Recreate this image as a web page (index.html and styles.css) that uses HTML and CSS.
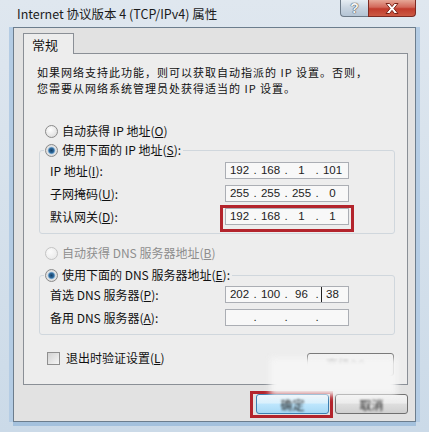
FILE: index.html
```html
<!DOCTYPE html>
<html lang="zh-CN">
<head>
  <meta charset="UTF-8" />
  <meta name="viewport" content="width=device-width, initial-scale=1.0"/>
  <title>Internet 协议版本 4 (TCP/IPv4) 属性</title>
  <link rel="stylesheet" href="styles.css">
</head>
<body>

  <div class="window">
    <div class="titlebar">
      <span class="title">Internet 协议版本 4 (TCP/IPv4) 属性</span>
      <div class="caption-btns">
        <span class="cap help">?</span>
        <span class="cap close">
          <svg width="16" height="11" viewBox="0 0 16 11">
            <path d="M2 .5h3.6L8 3.6 10.4.5H14L9.9 5.5 14 10.5h-3.6L8 7.4 5.6 10.5H2l4.1-5z" fill="#fff" stroke="#7a2418" stroke-width="1"/>
          </svg>
        </span>
      </div>
    </div>

    <div class="client">
      <div class="tabs"><span class="tab">常规</span></div>

      <div class="panel">
        <p class="desc">如果网络支持此功能，则可以获取自动指派的 IP 设置。否则，<br>您需要从网络系统管理员处获得适当的 IP 设置。</p>

        <label class="opt first"><span class="radio"></span>自动获得 IP 地址(<u>O</u>)</label>
        <fieldset class="group">
          <legend><label class="opt"><span class="radio on"></span>使用下面的 IP 地址(<u>S</u>):</label></legend>
          <div class="row">
            <span class="lbl">IP 地址(<u>I</u>):</span>
            <span class="ip"><span class="oct">192</span><span class="dot">.</span><span class="oct">168</span><span class="dot">.</span><span class="oct">1</span><span class="dot">.</span><span class="oct">101</span></span>
          </div>
          <div class="row">
            <span class="lbl">子网掩码(<u>U</u>):</span>
            <span class="ip"><span class="oct">255</span><span class="dot">.</span><span class="oct">255</span><span class="dot">.</span><span class="oct">255</span><span class="dot">.</span><span class="oct">0</span></span>
          </div>
          <div class="row">
            <span class="lbl">默认网关(<u>D</u>):</span>
            <span class="ip mark"><span class="oct">192</span><span class="dot">.</span><span class="oct">168</span><span class="dot">.</span><span class="oct">1</span><span class="dot">.</span><span class="oct">1</span></span>
          </div>
        </fieldset>

        <label class="opt second disabled"><span class="radio off"></span>自动获得 DNS 服务器地址(<u>B</u>)</label>
        <fieldset class="group dns">
          <legend><label class="opt"><span class="radio on"></span>使用下面的 DNS 服务器地址(<u>E</u>):</label></legend>
          <div class="row">
            <span class="lbl">首选 DNS 服务器(<u>P</u>):</span>
            <span class="ip"><span class="oct">202</span><span class="dot">.</span><span class="oct">100</span><span class="dot">.</span><span class="oct">96</span><span class="dot">.</span><span class="oct caret">38</span></span>
          </div>
          <div class="row">
            <span class="lbl">备用 DNS 服务器(<u>A</u>):</span>
            <span class="ip"><span class="oct"></span><span class="dot">.</span><span class="oct"></span><span class="dot">.</span><span class="oct"></span><span class="dot">.</span><span class="oct"></span></span>
          </div>
        </fieldset>

        <div class="check-row">
          <label class="opt"><span class="check"></span>退出时验证设置(<u>L</u>)</label>
          <span class="btn wide fuzzy"><span>高级(<u>V</u>)...</span></span>
        </div>
      </div>

      <div class="actions">
        <span class="btn default fuzzy"><span>确定</span></span>
        <span class="btn fuzzy"><span>取消</span></span>
      </div>
    </div>

    <div class="smudge"></div>
  </div>

</body>
</html>
```

FILE: styles.css
```css
body {
  margin: 0;
  width: 429px;
  height: 432px;
  overflow: hidden;
  font-family: "Noto Sans CJK SC", sans-serif;
  font-size: 12px;
  color: #111;
  background: linear-gradient(#dfe7ef, #cbdae8);
}

.window {
  position: relative;
  height: 432px;
}

/* title bar */
.titlebar {
  height: 27px;
  display: flex;
  align-items: flex-start;
}

.title {
  margin: 6px 0 0 17px;
  font-size: 12.5px;
  line-height: 16px;
  color: #1b1b1b;
}

.caption-btns {
  margin-left: auto;
  margin-right: 13px;
  display: flex;
}

.cap {
  height: 17px;
  box-sizing: border-box;
  border: 1px solid #6c7a88;
  border-top: none;
  display: flex;
  align-items: center;
  justify-content: center;
}

.help {
  width: 28px;
  border-right: none;
  border-radius: 0 0 0 4px;
  background: linear-gradient(#e6edf3, #c8d4e0 50%, #b4c4d4);
  color: #f4f4f4;
  font: bold 14px "Liberation Sans", sans-serif;
  text-shadow: 0 0 1px #333, 0 0 1px #333;
}

.close {
  width: 48px;
  border-color: #7d2a22;
  border-radius: 0 0 4px 0;
  background: linear-gradient(#e6a797, #d2685a 45%, #c13b2c 55%, #cc5a44);
}

/* dialog body */
.client {
  margin-left: 13px;
  width: 403px;
  height: 395px;
  box-sizing: border-box;
  border: 1px solid #6c7d8d;
  background: #e2e2e2;
  padding: 5px 7px 0 9px;
  box-shadow: -4px 0 0 #b4cce4, 4px 0 0 #b4cce4, 0 4px 0 #a4c1dd;
}

.tabs {
  display: flex;
  margin-bottom: -1px;
}

.tab {
  position: relative;
  width: 51px;
  height: 21px;
  box-sizing: border-box;
  border: 1px solid #8a8f96;
  border-bottom: none;
  background: #ededed;
  padding: 2px 0 0 8px;
  font-size: 13px;
  line-height: 18px;
}

.panel {
  height: 332px;
  box-sizing: border-box;
  border: 1px solid #8a8f96;
  background: #ededed;
  padding-top: 10px;
  display: flex;
  flex-direction: column;
}

.desc {
  margin: 0 0 0 13px;
  font-size: 11px;
  letter-spacing: 1px;
  line-height: 16px;
  white-space: nowrap;
}

.opt {
  display: flex;
  align-items: center;
  line-height: 16px;
  white-space: nowrap;
}

.opt.first {
  margin: 27px 0 0 21px;
}

.opt.second {
  margin: 11px 0 0 21px;
}

.disabled {
  color: #8e8e8e;
}

.radio {
  width: 13px;
  height: 13px;
  box-sizing: border-box;
  border-radius: 50%;
  border: 1px solid #8a8a8a;
  background: radial-gradient(circle at 40% 35%, #ffffff, #d6d6d6);
  margin-right: 4px;
}

.radio.on {
  background: radial-gradient(circle, #173f66 0, #2f6c9f 2.5px, #9cc0de 3.5px, #e4e4e4 4.2px, #cfcfcf 100%);
}

.radio.off {
  border-color: #c4c4c4;
  background: radial-gradient(circle at 40% 35%, #fbfbfb, #e6e6e6);
}

.group {
  margin: 3px 12px 0 15px;
  padding: 1px 0 5px 4px;
  border: 1px solid #d0d7dd;
  border-radius: 3px;
  min-width: 0;
}

.group.dns {
  margin-top: 6px;
  padding-top: 0;
}

.group legend {
  padding: 0 2px 0 1px;
}

.row {
  display: flex;
  align-items: center;
  height: 23px;
  padding-left: 6px;
}

.lbl {
  width: 175px;
  white-space: nowrap;
}

.ip {
  position: relative;
  width: 124px;
  height: 17px;
  box-sizing: border-box;
  border: 1px solid #abaeb4;
  background: #f8f8f8;
  display: flex;
  padding-left: 2px;
  font: 11.5px/15px "Liberation Sans", sans-serif;
  color: #222;
}

.oct {
  width: 23px;
  text-align: center;
}

.dot {
  width: 8px;
  text-align: center;
}

.caret {
  box-shadow: inset 5px 0 0 -4px #222;
}

/* red annotation boxes */
.mark::after,
.default::after {
  content: "";
  position: absolute;
  border: 3px solid #b3242c;
}

.mark::after {
  top: -4px;
  left: -6px;
  right: -6px;
  bottom: -8px;
}

.check-row {
  display: flex;
  align-items: flex-start;
  margin-top: 15px;
  padding: 0 13px 0 23px;
}

.check {
  width: 13px;
  height: 13px;
  box-sizing: border-box;
  border: 1px solid #8f8f8f;
  background: linear-gradient(135deg, #d2d2d2, #f6f6f6);
  margin-right: 6px;
}

.btn {
  position: relative;
  box-sizing: border-box;
  border: 1px solid #707070;
  border-radius: 3px;
  background: linear-gradient(#f3f3f3 0, #ececec 45%, #dedede 50%, #d0d0d0);
  display: flex;
  align-items: center;
  justify-content: center;
  color: #222;
}

.btn.wide {
  margin-left: auto;
  margin-top: 3px;
  width: 87px;
  height: 23px;
}

.fuzzy span {
  filter: blur(0.8px);
}

.actions {
  display: flex;
  justify-content: flex-end;
  gap: 6px;
  margin-top: 9px;
}

.actions .btn {
  width: 73px;
  height: 20px;
}

.btn.default {
  border-color: #3c7fb1;
  background: linear-gradient(#eaf6fd 0, #d9f0fc 45%, #bee6fd 50%, #a7d9f5);
}

.default::after {
  top: -4px;
  left: -7px;
  right: -5px;
  bottom: -5px;
}

/* blurred patch in the original screenshot */
.smudge {
  position: absolute;
  left: 270px;
  top: 358px;
  width: 127px;
  height: 37px;
  background: #f5f5f5;
  filter: blur(3px);
}
```
